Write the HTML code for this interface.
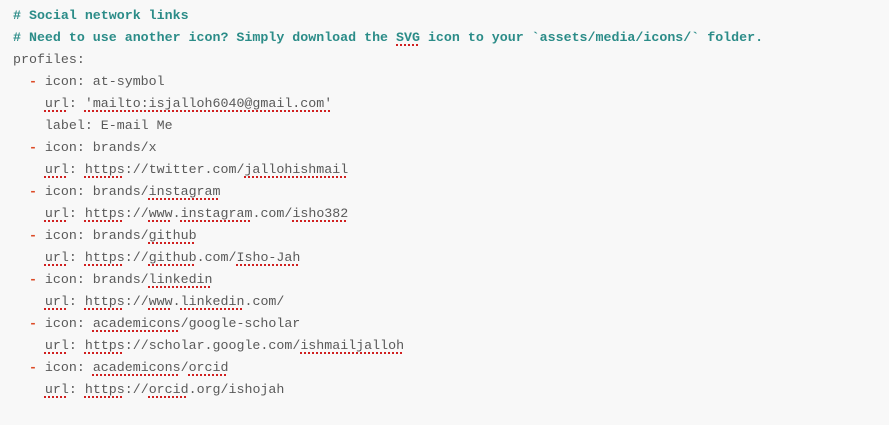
<!DOCTYPE html>
<html><head><meta charset="utf-8"><style>
html,body{margin:0;padding:0;background:#f8f8f8;width:889px;height:425px;overflow:hidden}
pre{margin:0;padding:5px 0 0 13px;font-family:"Liberation Mono",monospace;font-size:13.3px;line-height:22px;color:#595959}
.c{color:#2b8c88;font-weight:bold}
.d{color:#dc4a26;font-weight:bold}
u{text-decoration:underline dotted #d02020;text-decoration-thickness:2px;text-underline-offset:3px}
</style></head><body><pre><span class="c"># Social network links</span>
<span class="c"># Need to use another icon? Simply download the <u>SVG</u> icon to your `assets/media/icons/` folder.</span>
profiles:
  <span class="d">-</span> icon: at-symbol
    <u>url</u>: <u>'mailto:isjalloh6040@gmail.com'</u>
    label: E-mail Me
  <span class="d">-</span> icon: brands/x
    <u>url</u>: <u>https</u>://twitter.com/<u>jallohishmail</u>
  <span class="d">-</span> icon: brands/<u>instagram</u>
    <u>url</u>: <u>https</u>://<u>www</u>.<u>instagram</u>.com/<u>isho382</u>
  <span class="d">-</span> icon: brands/<u>github</u>
    <u>url</u>: <u>https</u>://<u>github</u>.com/<u>Isho-Jah</u>
  <span class="d">-</span> icon: brands/<u>linkedin</u>
    <u>url</u>: <u>https</u>://<u>www</u>.<u>linkedin</u>.com/
  <span class="d">-</span> icon: <u>academicons</u>/google-scholar
    <u>url</u>: <u>https</u>://scholar.google.com/<u>ishmailjalloh</u>
  <span class="d">-</span> icon: <u>academicons</u>/<u>orcid</u>
    <u>url</u>: <u>https</u>://<u>orcid</u>.org/ishojah</pre></body></html>
